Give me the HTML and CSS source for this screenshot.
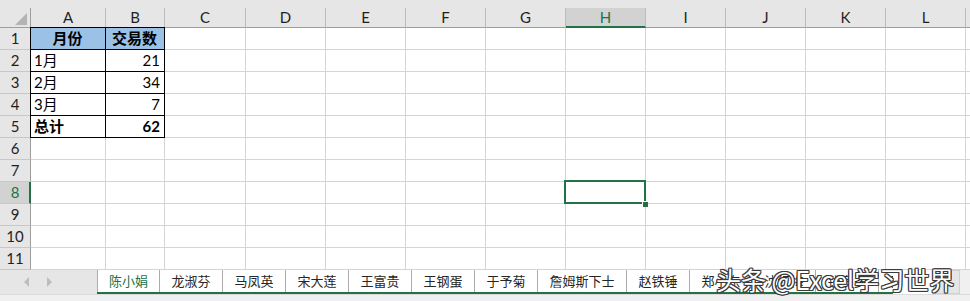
FILE: index.html
```html
<!DOCTYPE html>
<html lang="zh">
  <head>
    <meta charset="UTF-8" />
    <meta name="viewport" content="width=device-width, initial-scale=1.0" />
    <title>陈小娟 - Excel</title>
    <link rel="stylesheet" href="styles.css">
  </head>
  <body>
    <div class="topstrip"></div>

    <!-- Hoja de cálculo -->
    <div class="sheet">
      <div class="corner"><span class="tri"></span></div>
      <div class="ch">A</div><div class="ch">B</div><div class="ch">C</div><div class="ch">D</div><div class="ch">E</div><div class="ch">F</div><div class="ch">G</div><div class="ch sel">H</div><div class="ch">I</div><div class="ch">J</div><div class="ch">K</div><div class="ch">L</div><div class="ch last"></div>

      <div class="rh">1</div><div class="c t ta tt head">月份</div><div class="c t tt head">交易数</div><div class="c"></div><div class="c"></div><div class="c"></div><div class="c"></div><div class="c"></div><div class="c"></div><div class="c"></div><div class="c"></div><div class="c"></div><div class="c"></div><div class="c"></div>
      <div class="rh">2</div><div class="c t ta">1月</div><div class="c t num">21</div><div class="c"></div><div class="c"></div><div class="c"></div><div class="c"></div><div class="c"></div><div class="c"></div><div class="c"></div><div class="c"></div><div class="c"></div><div class="c"></div><div class="c"></div>
      <div class="rh">3</div><div class="c t ta">2月</div><div class="c t num">34</div><div class="c"></div><div class="c"></div><div class="c"></div><div class="c"></div><div class="c"></div><div class="c"></div><div class="c"></div><div class="c"></div><div class="c"></div><div class="c"></div><div class="c"></div>
      <div class="rh">4</div><div class="c t ta">3月</div><div class="c t num">7</div><div class="c"></div><div class="c"></div><div class="c"></div><div class="c"></div><div class="c"></div><div class="c"></div><div class="c"></div><div class="c"></div><div class="c"></div><div class="c"></div><div class="c"></div>
      <div class="rh">5</div><div class="c t ta bold">总计</div><div class="c t num bold">62</div><div class="c"></div><div class="c"></div><div class="c"></div><div class="c"></div><div class="c"></div><div class="c"></div><div class="c"></div><div class="c"></div><div class="c"></div><div class="c"></div><div class="c"></div>
      <div class="rh">6</div><div class="c"></div><div class="c"></div><div class="c"></div><div class="c"></div><div class="c"></div><div class="c"></div><div class="c"></div><div class="c"></div><div class="c"></div><div class="c"></div><div class="c"></div><div class="c"></div><div class="c"></div>
      <div class="rh">7</div><div class="c"></div><div class="c"></div><div class="c"></div><div class="c"></div><div class="c"></div><div class="c"></div><div class="c"></div><div class="c"></div><div class="c"></div><div class="c"></div><div class="c"></div><div class="c"></div><div class="c"></div>
      <div class="rh sel">8</div><div class="c"></div><div class="c"></div><div class="c"></div><div class="c"></div><div class="c"></div><div class="c"></div><div class="c"></div><div class="c active"><span class="selbox"></span><span class="handle"></span></div><div class="c"></div><div class="c"></div><div class="c"></div><div class="c"></div><div class="c"></div>
      <div class="rh">9</div><div class="c"></div><div class="c"></div><div class="c"></div><div class="c"></div><div class="c"></div><div class="c"></div><div class="c"></div><div class="c"></div><div class="c"></div><div class="c"></div><div class="c"></div><div class="c"></div><div class="c"></div>
      <div class="rh">10</div><div class="c"></div><div class="c"></div><div class="c"></div><div class="c"></div><div class="c"></div><div class="c"></div><div class="c"></div><div class="c"></div><div class="c"></div><div class="c"></div><div class="c"></div><div class="c"></div><div class="c"></div>
      <div class="rh">11</div><div class="c"></div><div class="c"></div><div class="c"></div><div class="c"></div><div class="c"></div><div class="c"></div><div class="c"></div><div class="c"></div><div class="c"></div><div class="c"></div><div class="c"></div><div class="c"></div><div class="c"></div>
    </div>

    <!-- Pestañas de hojas -->
    <div class="tabbar">
      <div class="nav"><span class="arr arr-left"></span><span class="arr arr-right"></span></div>
      <div class="tabs">
        <div class="tab active">陈小娟</div>
        <div class="tab">龙淑芬</div>
        <div class="tab">马凤英</div>
        <div class="tab">宋大莲</div>
        <div class="tab">王富贵</div>
        <div class="tab">王钢蛋</div>
        <div class="tab">于予菊</div>
        <div class="tab wide">詹姆斯下士</div>
        <div class="tab">赵铁锤</div>
        <div class="tab">郑小东</div>
        <div class="tab">沈红梅</div>
        <div class="tab">钱多多</div>
        <div class="tab">孙大圣</div>
      </div>
      <div class="split"></div>
      <div class="hscroll"></div>
      <div class="rest"></div>
    </div>
    <div class="status"></div>

    <div class="watermark">头条 @Excel学习世界</div>
  </body>
</html>
```

FILE: styles.css
```css
body {
  margin: 0;
  width: 970px;
  height: 301px;
  overflow: hidden;
  position: relative;
  background: #ffffff;
  font-family: Lato, "Noto Sans CJK SC", sans-serif;
  color: #1f1f1f;
}
.topstrip {
  height: 8px;
  background: #e6e6e6;
}
.sheet {
  display: grid;
  grid-template-columns: 31px 75px 59px 81px repeat(9, 80px) 1fr;
  grid-template-rows: 20px repeat(11, 22px);
}
.sheet > div {
  box-sizing: border-box;
}
.corner {
  background: #e6e6e6;
  border-right: 1px solid #9e9e9e;
  border-bottom: 1px solid #9e9e9e;
  display: flex;
  justify-content: flex-end;
  align-items: flex-end;
  padding: 0 3px 2px 0;
}
.tri {
  width: 0;
  height: 0;
  border-left: 12px solid transparent;
  border-bottom: 12px solid #b4b4b4;
}
.ch {
  background: #e6e6e6;
  border-right: 1px solid #bcbcbc;
  border-bottom: 1px solid #9e9e9e;
  text-align: center;
  font-size: 15px;
  line-height: 19px;
}
.ch.last {
  border-right: none;
}
.ch.sel {
  background: #d2d2d2;
  color: #217346;
  border-bottom: 2px solid #217346;
  line-height: 18px;
}
.rh {
  background: #e6e6e6;
  border-right: 1px solid #9e9e9e;
  border-bottom: 1px solid #c8c8c8;
  text-align: center;
  font-size: 15px;
  line-height: 21px;
}
.rh.sel {
  background: #d2d2d2;
  color: #217346;
  border-right: 2px solid #217346;
  padding-left: 1px;
}
.c {
  border-right: 1px solid #d4d4d4;
  border-bottom: 1px solid #d4d4d4;
  padding: 0 4px 0 3px;
  font-size: 15px;
  line-height: 21px;
  color: #000000;
  white-space: nowrap;
}
.c.t {
  border-right-color: #000000;
  border-bottom-color: #000000;
}
.c.ta {
  box-shadow: -1px 0 0 #000000;
}
.c.tt {
  box-shadow: 0 -1px 0 #000000;
}
.c.ta.tt {
  box-shadow: -1px 0 0 #000000, 0 -1px 0 #000000, -1px -1px 0 #000000;
}
.c.head {
  background: #9bc2e6;
  font-weight: bold;
  text-align: center;
}
.c.num {
  text-align: right;
}
.c.bold {
  font-weight: bold;
}
.c.active {
  position: relative;
}
.selbox {
  position: absolute;
  top: -2px;
  left: -2px;
  right: -1px;
  bottom: -1px;
  border: 2px solid #217346;
}
.handle {
  position: absolute;
  right: -3px;
  bottom: -4px;
  width: 5px;
  height: 5px;
  background: #217346;
  border: 1px solid #ffffff;
  border-right: none;
  border-bottom: none;
}
.tabbar {
  display: flex;
  height: 24px;
}
.nav {
  width: 97px;
  flex: none;
  background: #e6e6e6;
  display: flex;
  align-items: center;
  gap: 18px;
  padding-left: 24px;
  box-sizing: border-box;
}
.arr {
  width: 0;
  height: 0;
  border-top: 5px solid transparent;
  border-bottom: 5px solid transparent;
}
.arr-left {
  border-right: 5px solid #bdbdbd;
}
.arr-right {
  border-left: 5px solid #bdbdbd;
}
.tabs {
  width: 796px;
  flex: none;
  display: flex;
  overflow: hidden;
  border-bottom: 2px solid #217346;
  box-sizing: border-box;
}
.tab {
  width: 63px;
  flex: none;
  box-sizing: border-box;
  border-right: 1px solid #ababab;
  font-family: "Noto Sans CJK SC", sans-serif;
  font-size: 13px;
  line-height: 22px;
  text-align: center;
  color: #262626;
  background: #ffffff;
}
.tab.active {
  color: #217346;
  border-left: 1px solid #ababab;
}
.tab.wide {
  width: 89px;
}
.split {
  width: 40px;
  flex: none;
  background: #ffffff;
}
.hscroll {
  width: 27px;
  flex: none;
  background: #e6e6e6;
  border: 1px solid #d0d0d0;
  box-sizing: border-box;
}
.rest {
  flex: 1;
  background: #f0f0f0;
}
.status {
  height: 7px;
  background: #f0f0f0;
  border-top: 1px solid #dcdcdc;
  box-sizing: border-box;
}
.watermark {
  position: absolute;
  left: 716px;
  top: 263px;
  font-family: "Noto Sans CJK SC", sans-serif;
  font-size: 25px;
  line-height: 32px;
  color: #ffffff;
  white-space: nowrap;
  text-shadow: 1px 0 0 #3a3a3a, -1px 0 0 #3a3a3a, 0 1px 0 #3a3a3a, 0 -1px 0 #3a3a3a,
    1px 1px 0 #3a3a3a, -1px -1px 0 #3a3a3a, 1px -1px 0 #3a3a3a, -1px 1px 0 #3a3a3a;
}
```
